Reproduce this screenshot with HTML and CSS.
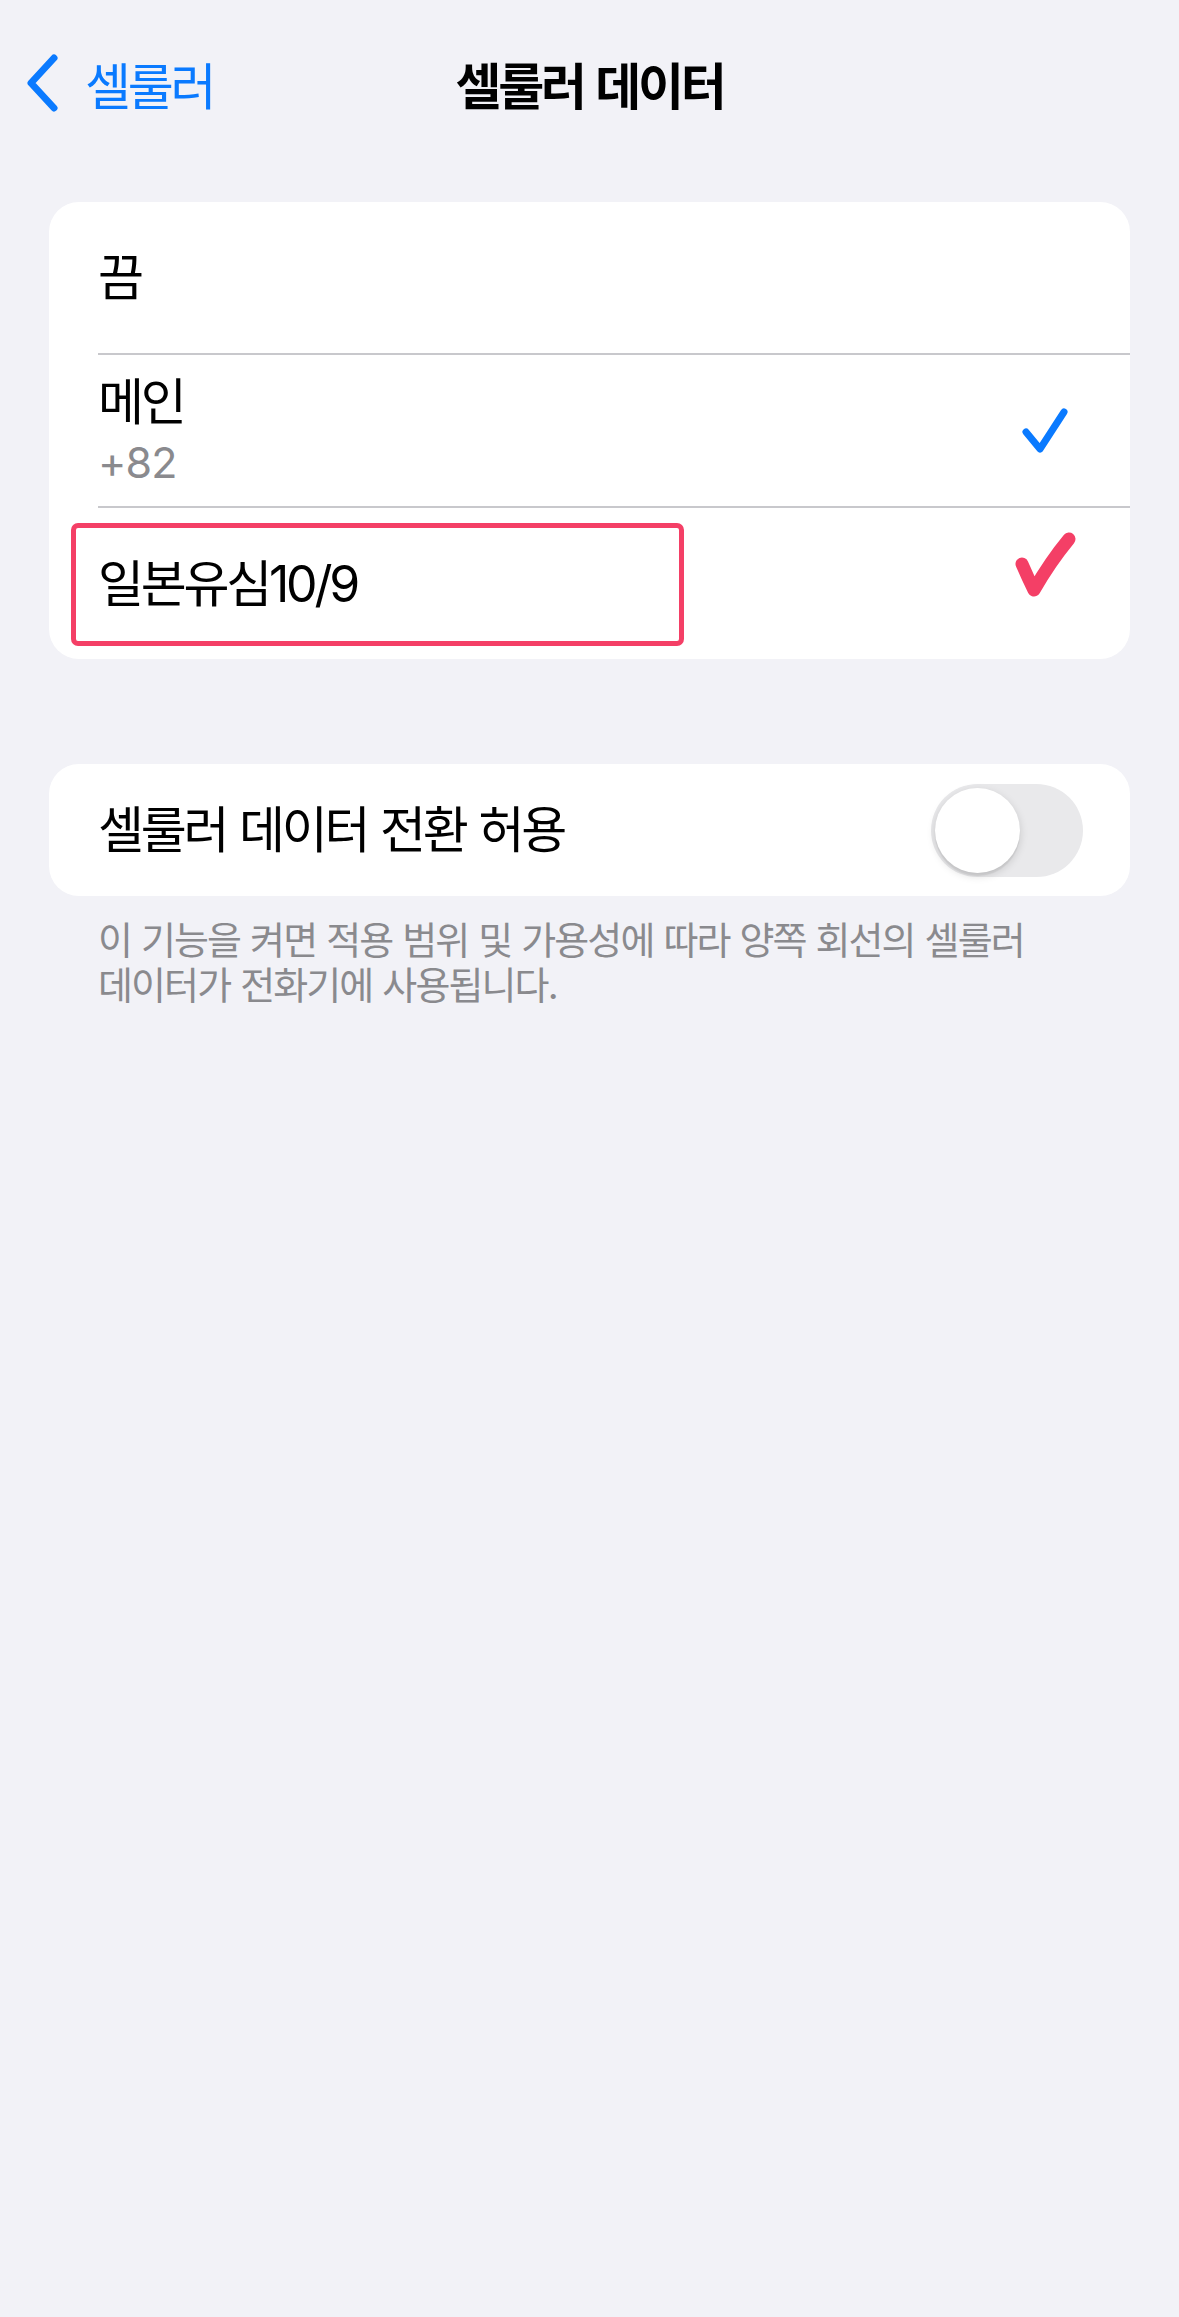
FILE: index.html
```html
<!DOCTYPE html>
<html lang="ko">
<head>
    <meta charset="UTF-8">
    <meta name="viewport" content="width=device-width, initial-scale=1.0">
    <title>셀룰러 데이터</title>
    <link rel="stylesheet" href="styles.css">
</head>
<body>
    <div class="nav">
        <div class="nav-back">
            <svg class="chevron" width="36" height="58" viewBox="0 0 36 58">
                <polyline points="29,4 6,29 29,54" fill="none" stroke="#0a7aff" stroke-width="7" stroke-linecap="round" stroke-linejoin="round"/>
            </svg>
            <span class="back-label">셀룰러</span>
        </div>
        <div class="nav-title">셀룰러 데이터</div>
        <div></div>
    </div>

    <div class="group">
        <div class="cell">
            <div class="cell-body">
                <div class="cell-text">
                    <div class="cell-title">끔</div>
                </div>
            </div>
        </div>
        <div class="cell">
            <div class="cell-body">
                <div class="cell-text">
                    <div class="cell-title">메인</div>
                    <div class="cell-sub">+82</div>
                </div>
                <div class="check-slot">
                    <svg width="48" height="48" viewBox="0 0 48 48">
                        <polyline points="5,25 19,42 43,5" fill="none" stroke="#0a7aff" stroke-width="7" stroke-linecap="round" stroke-linejoin="round"/>
                    </svg>
                </div>
            </div>
        </div>
        <div class="cell cell-last">
            <div class="cell-body">
                <div class="cell-text">
                    <div class="cell-title">일본유심10/9</div>
                </div>
                <div class="check-slot check-red">
                    <svg width="66" height="72" viewBox="0 0 66 72">
                        <path d="M10 35 Q16 49 22 61 Q38 33 57 10" fill="none" stroke="#f43f66" stroke-width="13" stroke-linecap="round" stroke-linejoin="round"/>
                    </svg>
                </div>
            </div>
            <div class="highlight"></div>
        </div>
    </div>

    <div class="group group-toggle">
        <div class="cell">
            <div class="cell-body">
                <div class="cell-text">
                    <div class="cell-title">셀룰러 데이터 전환 허용</div>
                </div>
                <div class="switch">
                    <div class="switch-knob"></div>
                </div>
            </div>
        </div>
    </div>
    <p class="footer">이 기능을 켜면 적용 범위 및 가용성에 따라 양쪽 회선의 셀룰러 데이터가 전화기에 사용됩니다.</p>
</body>
</html>
```

FILE: styles.css
```css
body {
    margin: 0;
    background-color: #f2f2f7;
    font-family: Inter, "Noto Sans CJK KR", sans-serif;
    color: #000;
    min-height: 2317px;
}
.nav {
    height: 166px;
    display: grid;
    grid-template-columns: 1fr auto 1fr;
    align-items: center;
}
.nav-back {
    display: flex;
    align-items: center;
    gap: 24px;
    padding-left: 25px;
    color: #0a7aff;
}
.back-label,
.nav-title,
.cell-title {
    letter-spacing: -0.065em;
    word-spacing: 0.04em;
}
.back-label {
    font-size: 50px;
}
.nav-title {
    font-size: 50px;
    font-weight: 600;
}
.group {
    margin: 36px 49px 0;
    background: #fff;
    border-radius: 30px;
}
.group-toggle {
    margin-top: 105px;
}
.cell {
    position: relative;
    padding-left: 49px;
}
.cell-body {
    display: flex;
    align-items: center;
    height: 151px;
    border-bottom: 2px solid #c8c8cc;
}
.cell-last .cell-body,
.group-toggle .cell-body {
    border-bottom: none;
}
.group-toggle .cell-body {
    height: 132px;
}
.cell-text {
    flex: 1;
}
.cell-title {
    font-size: 50px;
    line-height: 62px;
}
.cell-sub {
    font-size: 43px;
    line-height: 58px;
    color: #8a8a8e;
    letter-spacing: -0.02em;
}
.check-slot {
    width: 80px;
    margin-right: 45px;
    display: flex;
    justify-content: center;
}
.check-red {
    margin-bottom: 38px;
}
.highlight {
    position: absolute;
    left: 22px;
    top: 15px;
    width: 603px;
    height: 113px;
    border: 5px solid #f43f66;
    border-radius: 7px;
}
.switch {
    width: 152px;
    height: 93px;
    margin-right: 47px;
    border-radius: 47px;
    background: #e9e9eb;
    display: flex;
    align-items: center;
    padding: 0 4px;
    box-sizing: border-box;
}
.switch-knob {
    width: 85px;
    height: 85px;
    border-radius: 50%;
    background: #fff;
    box-shadow: 0 3px 8px rgba(0,0,0,0.15), 0 3px 1px rgba(0,0,0,0.06);
}
.footer {
    margin: 22px 60px 0 98px;
    font-size: 38px;
    line-height: 45px;
    color: #8a8a8e;
    letter-spacing: -0.05em;
    word-spacing: 0.03em;
    word-break: keep-all;
}
```
